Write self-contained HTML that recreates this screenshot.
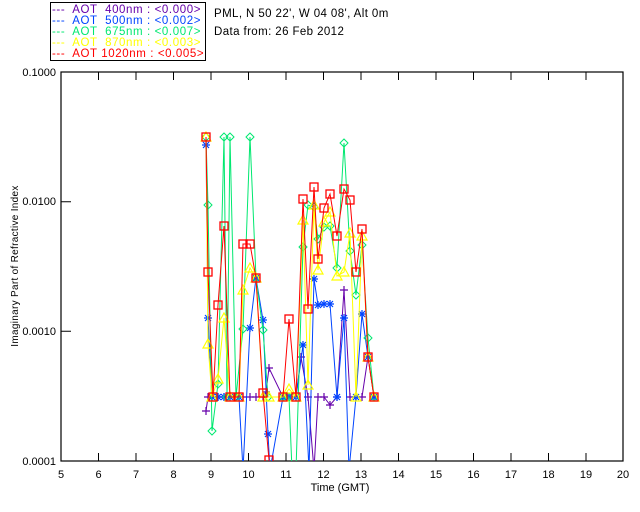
<!DOCTYPE html>
<html><head><meta charset="utf-8"><style>
html,body{margin:0;padding:0;background:#fff;}
svg{display:block;font-family:"Liberation Sans",sans-serif;}
</style></head><body>
<svg width="640" height="512" viewBox="0 0 640 512" xmlns="http://www.w3.org/2000/svg">
<defs>
<marker id="mr" markerWidth="12" markerHeight="12" refX="6" refY="6" markerUnits="userSpaceOnUse"><rect x="2" y="2" width="8" height="8" fill="none" stroke="#f00" stroke-width="1.3"/></marker>
<marker id="mg" markerWidth="10" markerHeight="10" refX="5" refY="5" markerUnits="userSpaceOnUse"><path d="M5 1L9 5L5 9L1 5Z" fill="none" stroke="#00e870" stroke-width="1"/></marker>
<marker id="my" markerWidth="12" markerHeight="12" refX="6" refY="6" markerUnits="userSpaceOnUse"><path d="M6 1L11 10L1 10Z" fill="none" stroke="#ff0" stroke-width="1.2"/></marker>
<marker id="mb" markerWidth="10" markerHeight="10" refX="5" refY="5" markerUnits="userSpaceOnUse"><path d="M5 1V9M1 5H9M2 2L8 8M8 2L2 8" stroke="#0044ff" stroke-width="1.2"/></marker>
<marker id="mp" markerWidth="10" markerHeight="10" refX="5" refY="5" markerUnits="userSpaceOnUse"><path d="M5 1V9M1 5H9" stroke="#6600aa" stroke-width="1.2"/></marker>
<clipPath id="c"><rect x="61" y="72" width="562" height="389"/></clipPath>
</defs>
<rect x="50.5" y="2.5" width="155" height="58" fill="none" stroke="#000"/>
<g font-size="11.5" letter-spacing="0.6">
<text x="52" y="13" fill="#6600aa" xml:space="preserve">---  AOT  400nm : &lt;0.000&gt;</text>
<text x="52" y="24" fill="#0044ff" xml:space="preserve">---  AOT  500nm : &lt;0.002&gt;</text>
<text x="52" y="35" fill="#00e870" xml:space="preserve">---  AOT  675nm : &lt;0.007&gt;</text>
<text x="52" y="46" fill="#ffff00" xml:space="preserve">---  AOT  870nm : &lt;0.003&gt;</text>
<text x="52" y="57" fill="#ff0000" xml:space="preserve">---  AOT 1020nm : &lt;0.005&gt;</text>
</g>
<g font-size="11.5" letter-spacing="0.4" fill="#000">
<text x="214" y="17">PML, N 50 22', W 04 08', Alt 0m</text>
<text x="214" y="35">Data from: 26 Feb 2012</text>
</g>
<rect x="61" y="72" width="562" height="389" fill="none" stroke="#000" stroke-width="1.2"/>
<g stroke="#000" stroke-width="1">
<path d="M98.5 461v-8M136 461v-8M173.5 461v-8M211 461v-8M248.5 461v-8M286 461v-8M323.5 461v-8M361 461v-8M398.5 461v-8M436 461v-8M473.5 461v-8M511 461v-8M548.5 461v-8M586 461v-8"/>
<path d="M98.5 72v8M136 72v8M173.5 72v8M211 72v8M248.5 72v8M286 72v8M323.5 72v8M361 72v8M398.5 72v8M436 72v8M473.5 72v8M511 72v8M548.5 72v8M586 72v8"/>
<path d="M61 201.7h10M61 331.3h10"/>
</g>
<g font-size="11" fill="#000">
<text x="56" y="76" text-anchor="end">0.1000</text>
<text x="56" y="205" text-anchor="end">0.0100</text>
<text x="56" y="335" text-anchor="end">0.0010</text>
<text x="56" y="465" text-anchor="end">0.0001</text>
<g text-anchor="middle">
<text x="61" y="478">5</text><text x="98.5" y="478">6</text><text x="136" y="478">7</text><text x="173.5" y="478">8</text><text x="211" y="478">9</text><text x="248.5" y="478">10</text><text x="286" y="478">11</text><text x="323.5" y="478">12</text><text x="361" y="478">13</text><text x="398.5" y="478">14</text><text x="436" y="478">15</text><text x="473.5" y="478">16</text><text x="511" y="478">17</text><text x="548.5" y="478">18</text><text x="586" y="478">19</text><text x="623" y="478">20</text>
<text x="340" y="491">Time (GMT)</text>
</g>
<text transform="translate(18,266) rotate(-90)" text-anchor="middle" font-size="10" letter-spacing="0.3">Imaginary Part of Refractive Index</text>
</g>
<g clip-path="url(#c)" fill="none" stroke-width="1">
<polyline stroke="#6600aa" marker-start="url(#mp)" marker-mid="url(#mp)" marker-end="url(#mp)" points="206,411 208,397 212,397 218,397 224,397 230,397 239,397 243,397 250,397 256,397 263,397 266,392 269,368 283,397 289,397 296,397 301,357 308,397 314,470 318,397 324,397 330,405 337,397 344,290 350,397 356,397 362,397 368,357 374,397"/>
<polyline stroke="#0044ff" marker-start="url(#mb)" marker-mid="url(#mb)" marker-end="url(#mb)" points="206,145 208,318 212,397 218,397 224,397 230,397 239,397 243,470 250,328 256,278 263,320 268,434 270,470 283,397 289,397 296,397 303,345 309,470 314,279 318,305 324,304 330,304 337,397 344,318 349,470 356,397 362,314 368,357 374,397"/>
<polyline stroke="#00e870" marker-start="url(#mg)" marker-mid="url(#mg)" marker-end="url(#mg)" points="206,137 208,205 212,431 218,384 224,137 227,397 230,137 236,397 243,329 250,137 256,278 263,330 268,397 283,397 289,397 292,470 296,470 303,247 308,205 314,207 318,239 324,227 330,226 337,268 344,143 350,251 356,295 362,245 368,338 374,397"/>
<polyline stroke="#ffff00" marker-start="url(#my)" marker-mid="url(#my)" marker-end="url(#my)" points="206,137 208,344 212,397 218,379 224,318 230,397 239,397 243,290 250,268 256,278 263,397 269,397 283,397 289,389 296,397 303,220 308,385 314,205 318,270 324,222 330,212 337,276 344,272 350,233 356,397 362,236 368,357 374,397"/>
<polyline stroke="#ff0000" marker-start="url(#mr)" marker-mid="url(#mr)" marker-end="url(#mr)" points="206,137 208,272 213,397 218,305 224,226 230,397 239,397 243,244 250,244 256,278 263,393 269,460 269,470"/>
<polyline stroke="#ff0000" marker-start="url(#mr)" marker-mid="url(#mr)" marker-end="url(#mr)" points="283,397 289,319 296,397 303,199 308,309 314,187 318,259 324,208 330,194 337,236 344,189 350,200 356,272 362,229 368,357 374,397"/>
</g>
</svg>
</body></html>
